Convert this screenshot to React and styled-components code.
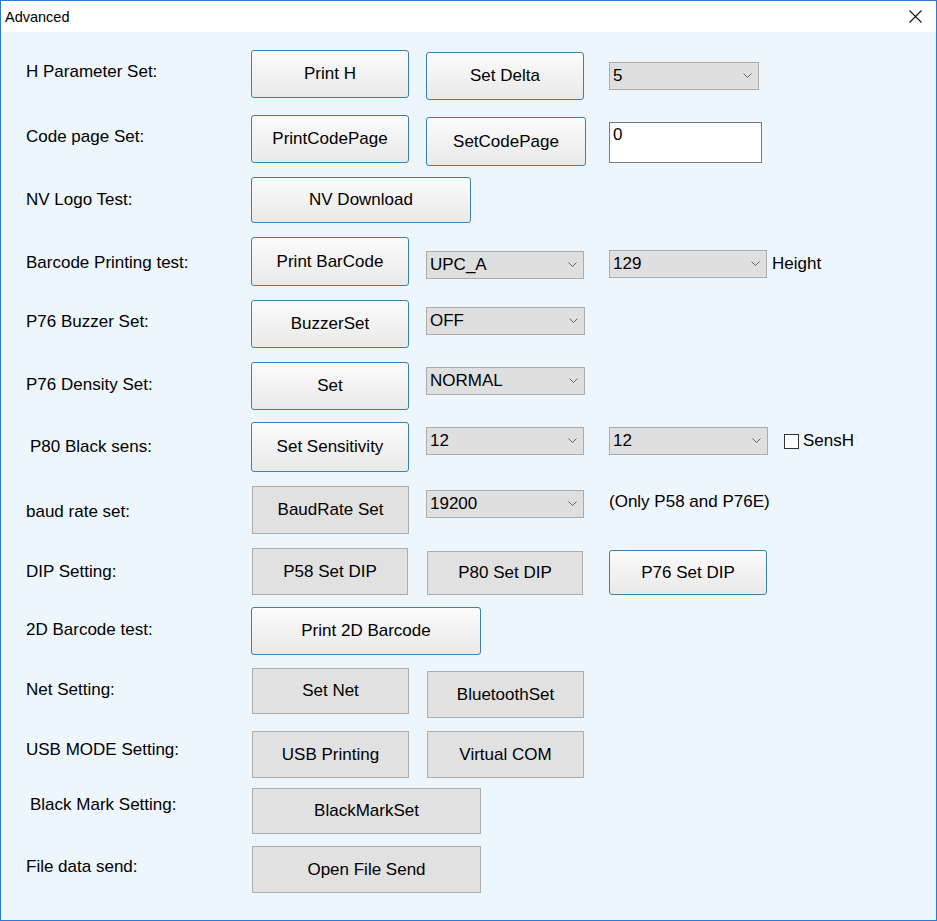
import React from 'react';
import styled, { createGlobalStyle } from 'styled-components';

const GlobalStyle = createGlobalStyle`
  html, body {
    margin: 0;
    padding: 0;
    background: #ffffff;
  }
  * { box-sizing: border-box; }
`;

const Window = styled.div`
  width: 937px;
  height: 921px;
  border: 1px solid #2a7ad2;
  display: flex;
  flex-direction: column;
  font-family: "Liberation Sans", Arial, sans-serif;
  color: #000;
`;

const TitleBar = styled.div`
  height: 31px;
  background: #ffffff;
  display: flex;
  align-items: center;
  justify-content: space-between;
  padding: 0 14px 0 4px;
  font-size: 14.5px;
`;

const Content = styled.div`
  flex: 1;
  background: #eef6fd;
  padding: 18px 0 0 25px;
`;

const Row = styled.div`
  display: grid;
  grid-template-columns: 225px 175px 183px auto;
  align-items: start;
  height: ${(p) => p.$h || 60}px;
`;

const Label = styled.div`
  font-size: 17px;
  line-height: 20px;
  margin-top: ${(p) => p.$dy || 0}px;
  padding-left: ${(p) => p.$dx || 0}px;
  white-space: nowrap;
`;

const Button = styled.div`
  width: ${(p) => p.$w || 158}px;
  height: ${(p) => p.$hh || 48}px;
  margin-top: ${(p) => p.$dy || 0}px;
  margin-left: ${(p) => p.$dx || 0}px;
  grid-column: ${(p) => (p.$span ? 'span 2' : 'auto')};
  display: flex;
  align-items: center;
  justify-content: center;
  font-size: 17px;
  white-space: nowrap;
  border: 1px solid ${(p) => (p.$flat ? '#adadad' : '#3c7fb1')};
  border-radius: ${(p) => (p.$flat ? 0 : 3)}px;
  background: ${(p) =>
    p.$flat ? '#e1e1e1' : 'linear-gradient(#fbfbfb 0%, #f2f2f2 50%, #e9e9e9 100%)'};
`;

const Combo = styled.div`
  width: ${(p) => p.$w || 158}px;
  height: 28px;
  margin-top: ${(p) => p.$dy || 0}px;
  display: flex;
  align-items: center;
  justify-content: space-between;
  padding: 0 6px 1px 3px;
  background: #dfdfdf;
  border: 1px solid #acacac;
  font-size: 17px;
`;

const TextBox = styled.div`
  width: 153px;
  height: 41px;
  margin-top: ${(p) => p.$dy || 0}px;
  background: #ffffff;
  border: 1px solid #7a7a7a;
  padding: 2px 0 0 3px;
  font-size: 17px;
  line-height: 20px;
`;

const Cell = styled.div`
  display: flex;
  align-items: center;
  gap: ${(p) => p.$gap || 5}px;
  margin-top: ${(p) => p.$dy || 0}px;
  font-size: 17px;
  white-space: nowrap;
`;

const Note = styled.div`
  font-size: 17px;
  line-height: 20px;
  margin-top: ${(p) => p.$dy || 0}px;
  white-space: nowrap;
`;

const CheckBox = styled.span`
  width: 15px;
  height: 15px;
  background: #fff;
  border: 1px solid #333;
  margin-left: 12px;
`;

const Chevron = () => (
  <svg width="9" height="5" viewBox="0 0 9 5">
    <path d="M0.5 0.5 L4.5 4.5 L8.5 0.5" fill="none" stroke="#606060" strokeWidth="1" />
  </svg>
);

const CloseIcon = () => (
  <svg width="13" height="13" viewBox="0 0 13 13">
    <path d="M0.5 0.5 L12.5 12.5 M12.5 0.5 L0.5 12.5" stroke="#111" strokeWidth="1.1" />
  </svg>
);

const Select = ({ value, ...rest }) => (
  <Combo {...rest}>
    <span>{value}</span>
    <Chevron />
  </Combo>
);

export default function App() {
  return (
    <>
      <GlobalStyle />
      <Window>
        <TitleBar>
          <span>Advanced</span>
          <CloseIcon />
        </TitleBar>
        <Content>
          <Row $h={65}>
            <Label $dy={12}>H Parameter Set:</Label>
            <Button>Print H</Button>
            <Button $dy={2}>Set Delta</Button>
            <Select value="5" $w={150} $dy={12} />
          </Row>
          <Row $h={62}>
            <Label $dy={12}>Code page Set:</Label>
            <Button>PrintCodePage</Button>
            <Button $w={160} $hh={49} $dy={2}>SetCodePage</Button>
            <TextBox $dy={7}>0</TextBox>
          </Row>
          <Row $h={60}>
            <Label $dy={13}>NV Logo Test:</Label>
            <Button $w={220} $hh={46} $span>NV Download</Button>
          </Row>
          <Row $h={63}>
            <Label $dy={16}>Barcode Printing test:</Label>
            <Button $hh={49}>Print BarCode</Button>
            <Select value="UPC_A" $dy={14} />
            <Cell $dy={13}>
              <Select value="129" />
              Height
            </Cell>
          </Row>
          <Row $h={62}>
            <Label $dy={12}>P76 Buzzer Set:</Label>
            <Button>BuzzerSet</Button>
            <Select value="OFF" $w={159} $dy={7} />
          </Row>
          <Row $h={60}>
            <Label $dy={13}>P76 Density Set:</Label>
            <Button>Set</Button>
            <Select value="NORMAL" $w={159} $dy={5} />
          </Row>
          <Row $h={64}>
            <Label $dy={15} $dx={4}>P80 Black sens:</Label>
            <Button $hh={50}>Set Sensitivity</Button>
            <Select value="12" $dy={5} />
            <Cell $dy={5} $gap={4}>
              <Select value="12" $w={159} />
              <CheckBox />
              SensH
            </Cell>
          </Row>
          <Row $h={62}>
            <Label $dy={16}>baud rate set:</Label>
            <Button $flat $w={157} $dx={1}>BaudRate Set</Button>
            <Select value="19200" $dy={4} />
            <Note $dy={6}>(Only P58 and P76E)</Note>
          </Row>
          <Row $h={59}>
            <Label $dy={14}>DIP Setting:</Label>
            <Button $flat $w={156} $hh={47} $dx={1}>P58 Set DIP</Button>
            <Button $flat $w={156} $hh={44} $dx={1} $dy={3}>P80 Set DIP</Button>
            <Button $hh={45} $dy={2}>P76 Set DIP</Button>
          </Row>
          <Row $h={61}>
            <Label $dy={13}>2D Barcode test:</Label>
            <Button $w={230} $span>Print 2D Barcode</Button>
          </Row>
          <Row $h={63}>
            <Label $dy={12}>Net Setting:</Label>
            <Button $flat $w={157} $hh={46} $dx={1}>Set Net</Button>
            <Button $flat $w={157} $hh={47} $dx={1} $dy={3}>BluetoothSet</Button>
          </Row>
          <Row $h={57}>
            <Label $dy={9}>USB MODE Setting:</Label>
            <Button $flat $w={157} $hh={47} $dx={1}>USB Printing</Button>
            <Button $flat $w={157} $hh={47} $dx={1}>Virtual COM</Button>
          </Row>
          <Row $h={58}>
            <Label $dy={7} $dx={4}>Black Mark Setting:</Label>
            <Button $flat $w={229} $hh={46} $dx={1} $span>BlackMarkSet</Button>
          </Row>
          <Row $h={60}>
            <Label $dy={11}>File data send:</Label>
            <Button $flat $w={229} $hh={47} $dx={1} $span>Open File Send</Button>
          </Row>
        </Content>
      </Window>
    </>
  );
}
